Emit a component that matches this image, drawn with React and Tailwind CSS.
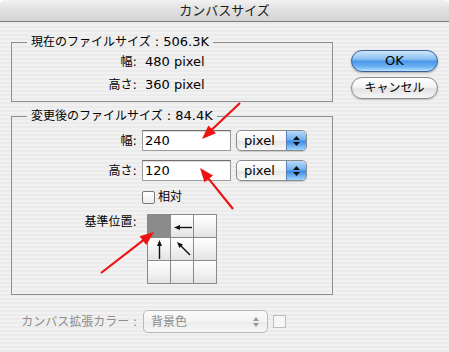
import React from "react";

function Arrow({ x1, y1, x2, y2, color = "#ee1111", hl = 14, hw = 5.5, sw = 2.2 }) {
  const dx = x2 - x1, dy = y2 - y1;
  const L = Math.hypot(dx, dy);
  const ux = dx / L, uy = dy / L;
  const bx = x2 - ux * hl, by = y2 - uy * hl;
  const px = -uy, py = ux;
  return (
    <g>
      <line x1={x1} y1={y1} x2={bx + ux * 1} y2={by + uy * 1} stroke={color} strokeWidth={sw} />
      <polygon
        points={`${x2},${y2} ${bx + px * hw},${by + py * hw} ${bx - px * hw},${by - py * hw}`}
        fill={color}
      />
    </g>
  );
}

function J({ children }) {
  return <span className="text-[12px]">{children}</span>;
}

function PopUp({ label }) {
  return (
    <div className="w-[71px] h-[21px] rounded-[5px] border border-[#8a8a8a] overflow-hidden flex bg-[linear-gradient(180deg,#ffffff_0%,#f4f4f4_50%,#e6e6e6_55%,#f8f8f8_100%)] shadow-[0_1px_1px_rgba(0,0,0,0.15)]">
      <div className="flex-1 flex items-center pl-[7px] leading-[16px]">{label}</div>
      <div className="w-[20px] border-l border-[#5a7fb8] flex flex-col items-center justify-center gap-[2px] bg-[linear-gradient(180deg,#b9daf8_0%,#6fb0f0_45%,#3d8ce6_55%,#9fd3ff_100%)]">
        <svg width="7" height="4" viewBox="0 0 7 4"><polygon points="3.5,0 7,4 0,4" fill="#111" /></svg>
        <svg width="7" height="4" viewBox="0 0 7 4"><polygon points="0,0 7,0 3.5,4" fill="#111" /></svg>
      </div>
    </div>
  );
}

function TextField({ value }) {
  return (
    <div className="w-[89px] h-[21px] bg-white border border-[#9c9c9c] border-t-[#707070] shadow-[inset_0_1px_1px_rgba(0,0,0,0.15)] flex items-center pl-[2px] leading-[16px]">
      {value}
    </div>
  );
}

function Cell({ children, selected }) {
  return (
    <div
      className={
        "w-[22px] h-[22px] flex items-center justify-center " +
        (selected
          ? "bg-[#8b8b8b]"
          : "bg-[linear-gradient(180deg,#ffffff_0%,#f3f3f3_50%,#e3e3e3_100%)]")
      }
    >
      {children}
    </div>
  );
}

export default function App() {
  return (
    <div className="relative w-[449px] h-[352px] overflow-hidden bg-white font-['DejaVu_Sans','Noto_Sans_CJK_JP',sans-serif] text-[13px] text-black">
      {/* title bar */}
      <div className="h-[22px] rounded-t-[5px] border-b border-[#7d7d7d] bg-[linear-gradient(180deg,#f2f2f2_0%,#e2e2e2_40%,#d3d3d3_100%)] flex items-center justify-center">
        <span className="text-[13px] leading-[16px] text-[#1a1a1a]">カンバスサイズ</span>
      </div>

      {/* body */}
      <div className="h-[330px] flex pl-[11px] pt-[12px] bg-[repeating-linear-gradient(180deg,#ebebeb_0px,#ebebeb_2px,#f1f1f1_2px,#f1f1f1_4px)]">
        <div className="w-[322px] flex flex-col">
          {/* group 1 */}
          <fieldset className="border border-[#8e8e8e] pl-[15px] pr-[10px] pt-[2px] pb-[6px] min-w-0">
            <legend className="px-[4px] leading-[16px]">
              <J>現在のファイルサイズ</J> : 506.3K
            </legend>
            <div className="flex items-center h-[20px]">
              <div className="w-[110px] text-right leading-[16px]"><J>幅</J>:</div>
              <div className="ml-[8px] leading-[16px]">480 pixel</div>
            </div>
            <div className="flex items-center h-[20px] mt-[3px]">
              <div className="w-[110px] text-right leading-[16px]"><J>高さ</J>:</div>
              <div className="ml-[8px] leading-[16px]">360 pixel</div>
            </div>
          </fieldset>

          {/* group 2 */}
          <fieldset className="mt-[6px] border border-[#8e8e8e] pl-[15px] pr-[10px] pt-[6px] pb-[10px] min-w-0">
            <legend className="px-[4px] leading-[16px]">
              <J>変更後のファイルサイズ</J> : 84.4K
            </legend>
            <div className="flex items-center h-[21px]">
              <div className="w-[110px] text-right leading-[16px]"><J>幅</J>:</div>
              <div className="ml-[5px]"><TextField value="240" /></div>
              <div className="ml-[5px]"><PopUp label="pixel" /></div>
            </div>
            <div className="flex items-center h-[21px] mt-[9px]">
              <div className="w-[110px] text-right leading-[16px]"><J>高さ</J>:</div>
              <div className="ml-[5px]"><TextField value="120" /></div>
              <div className="ml-[5px]"><PopUp label="pixel" /></div>
            </div>
            <div className="flex items-center h-[16px] mt-[8px] pl-[115px]">
              <div className="w-[13px] h-[13px] rounded-[2px] border border-[#7a7a7a] bg-[linear-gradient(180deg,#ffffff_0%,#ececec_100%)]" />
              <div className="ml-[3px] leading-[16px]"><J>相対</J></div>
            </div>
            <div className="flex items-start mt-[9px]">
              <div className="w-[110px] text-right leading-[16px]"><J>基準位置</J>:</div>
              <div className="ml-[10px] grid grid-cols-3 gap-px p-px bg-[#8a8a8a]">
                <Cell selected />
                <Cell>
                  <svg width="22" height="22" viewBox="0 0 22 22">
                    <Arrow x1={21} y1={12.5} x2={3} y2={12.5} color="#111" hl={6} hw={2.5} sw={1.4} />
                  </svg>
                </Cell>
                <Cell />
                <Cell>
                  <svg width="22" height="22" viewBox="0 0 22 22">
                    <Arrow x1={11.5} y1={21} x2={11.5} y2={2} color="#111" hl={6} hw={2.5} sw={1.4} />
                  </svg>
                </Cell>
                <Cell>
                  <svg width="22" height="22" viewBox="0 0 22 22">
                    <Arrow x1={19} y1={17} x2={6} y2={4} color="#111" hl={6} hw={2.5} sw={1.4} />
                  </svg>
                </Cell>
                <Cell />
                <Cell />
                <Cell />
                <Cell />
              </div>
            </div>
          </fieldset>

          {/* bottom row */}
          <div className="flex items-center mt-[15px] h-[23px]">
            <div className="w-[126px] text-right leading-[16px] text-[#8c8c8c]"><J>カンバス拡張カラー :</J></div>
            <div className="ml-[6px] w-[125px] h-[23px] rounded-[5px] border border-[#b8b8b8] flex items-center bg-[linear-gradient(180deg,#fbfbfb_0%,#f3f3f3_50%,#ececec_55%,#f7f7f7_100%)]">
              <div className="flex-1 pl-[7px] leading-[16px] text-[#8c8c8c]"><J>背景色</J></div>
              <div className="w-[16px] mr-[3px] flex flex-col items-center gap-[2px]">
                <svg width="6" height="4" viewBox="0 0 6 4"><polygon points="3,0 6,4 0,4" fill="#9a9a9a" /></svg>
                <svg width="6" height="4" viewBox="0 0 6 4"><polygon points="0,0 6,0 3,4" fill="#9a9a9a" /></svg>
              </div>
            </div>
            <div className="ml-[5px] w-[13px] h-[13px] border border-[#bcbcbc] bg-[#f6f6f6]" />
          </div>
        </div>

        {/* buttons */}
        <div className="ml-[18px] pt-[16px] flex flex-col gap-[5px]">
          <div className="w-[87px] h-[22px] rounded-full border border-[#3d5f9c] flex items-center justify-center bg-[linear-gradient(180deg,#cfe6fb_0%,#8cc0f2_40%,#4a97e8_52%,#6fb4f4_80%,#b6e2ff_100%)] shadow-[0_1px_2px_rgba(0,0,0,0.3)]">
            <span className="leading-[16px]">OK</span>
          </div>
          <div className="w-[87px] h-[22px] rounded-full border border-[#8a8a8a] flex items-center justify-center bg-[linear-gradient(180deg,#ffffff_0%,#f4f4f4_45%,#e2e2e2_55%,#f6f6f6_100%)] shadow-[0_1px_2px_rgba(0,0,0,0.2)]">
            <span className="leading-[16px]"><J>キャンセル</J></span>
          </div>
        </div>
      </div>

      {/* red annotation arrows */}
      <svg className="absolute inset-0 pointer-events-none" width="449" height="352" viewBox="0 0 449 352">
        <Arrow x1={240} y1={103} x2={202} y2={139} />
        <Arrow x1={233} y1={209} x2={200} y2={168} />
        <Arrow x1={101} y1={273} x2={154} y2={232} />
      </svg>
    </div>
  );
}
